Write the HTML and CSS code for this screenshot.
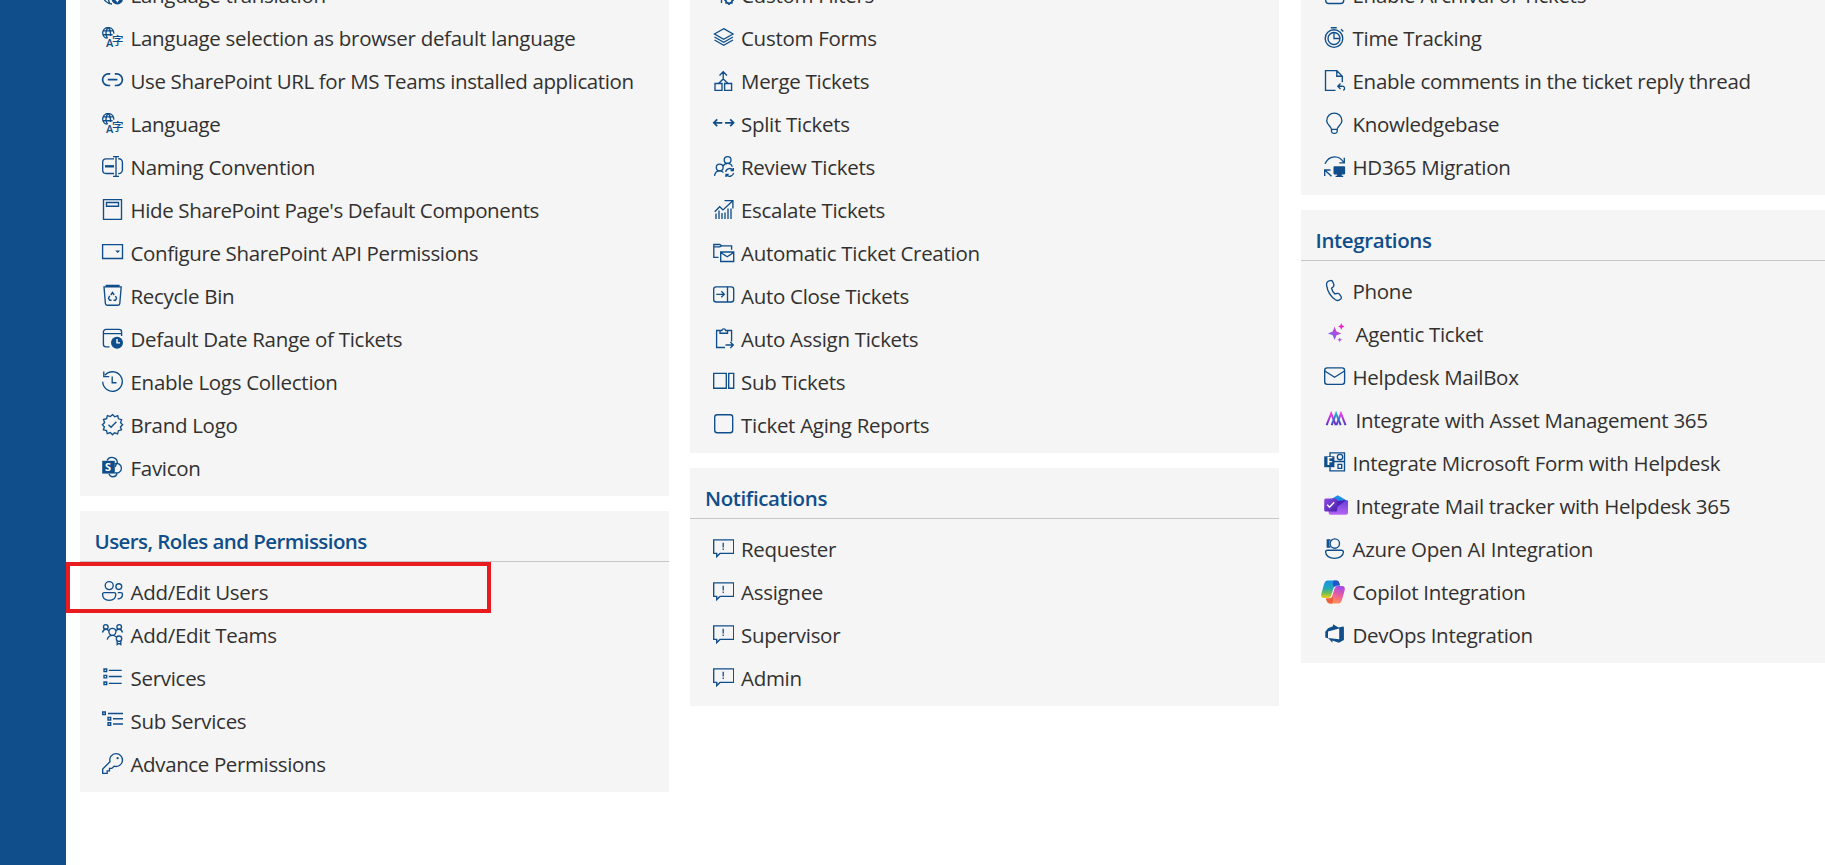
FILE: index.html
```html
<!DOCTYPE html>
<html lang="en">
<head>
<meta charset="utf-8">
<title>Settings</title>
<link rel="stylesheet" href="styles.css">
</head>
<body>
<svg class="defs" aria-hidden="true">
  <defs>
    <linearGradient id="g-spark" x1="0" y1="1" x2="1" y2="0"><stop offset="0" stop-color="#5b6cf0"/><stop offset=".5" stop-color="#a453e4"/><stop offset="1" stop-color="#f01cc0"/></linearGradient>
    <linearGradient id="g-am" x1="0" y1="0" x2="0" y2="1"><stop offset="0" stop-color="#ee3fe0"/><stop offset="1" stop-color="#5533c4"/></linearGradient>
    <linearGradient id="g-am2" x1="0" y1="0" x2="0" y2="1"><stop offset="0" stop-color="#22b4d4"/><stop offset="1" stop-color="#4a36c8"/></linearGradient>
    <linearGradient id="g-mail" x1="0" y1="0" x2="1" y2="1"><stop offset="0" stop-color="#8b4be0"/><stop offset="1" stop-color="#4a1fb0"/></linearGradient>
    <linearGradient id="g-mail2" x1="0" y1="0" x2="0" y2="1"><stop offset="0" stop-color="#6a3fd8"/><stop offset="1" stop-color="#b765f5"/></linearGradient>
    <linearGradient id="g-cp1" x1="0" y1="0" x2="0" y2="1"><stop offset="0" stop-color="#1b8fe8"/><stop offset=".45" stop-color="#22a9b8"/><stop offset=".75" stop-color="#7cc04a"/><stop offset="1" stop-color="#f2cf1d"/></linearGradient>
    <linearGradient id="g-cp2" x1="0.6" y1="0" x2="0.3" y2="1"><stop offset="0" stop-color="#a64be8"/><stop offset=".5" stop-color="#ee5f9a"/><stop offset="1" stop-color="#ff9a50"/></linearGradient>
    <symbol id="i-lang" viewBox="0 0 21 21">
      <path d="M4.6 11.3A5.5 5.5 0 1 1 11.7 6.600M.8 3.900h10.800M.8 7.700h9.800M6.200.5C3.400 3.200 3.400 8.300 5.600 11.300M6.200.5C8.400 2.600 8.900 5.600 8.400 9"/>
      <text x="4" y="19.700" class="i-latin">A</text><text x="9.900" y="17.800" class="i-han">字</text>
    </symbol>
    <symbol id="i-chat" viewBox="0 0 21 21">
      <path d="M.7 1.800h20v13.600H7l-3.300 3.200v-3.200h-3z"/><path d="M10.200 4.800v4.600M10.200 10.600v1.300" class="soft"/>
    </symbol>
    <symbol id="i-square" viewBox="0 0 21 21"><rect x="1.700" y=".7" width="18" height="18" rx="2.500"/></symbol>
  </defs>
</svg>
<div class="app">
  <aside class="rail"></aside>
  <main class="board">
    <div class="column">
      <section class="card">
        <ul class="list">
          <li class="item"><svg class="icon" viewBox="0 0 21 21"><path d="M10 20A9.500 9.500 0 1 1 19.800 10M1 7h18M1 14h9M10 .5C5 6 5 14 8 20"/><circle cx="15.300" cy="14.800" r="5.700" class="fill"/><path d="M15.300 12v5l-1.800-1.800M15.300 17l1.800-1.800" class="knock"/></svg>Language translation</li>
          <li class="item"><svg class="icon"><use href="#i-lang"/></svg>Language selection as browser default language</li>
          <li class="item tight"><svg class="icon" viewBox="0 0 21 21"><path class="bold" d="M8.200 3.900H6.400a5.600 5.600 0 0 0 0 11.600h1.800M12.800 3.900h1.800a5.600 5.600 0 0 1 0 11.600h-1.800M5.800 9.700h9.600"/></svg>Use SharePoint URL for MS Teams installed application</li>
          <li class="item"><svg class="icon"><use href="#i-lang"/></svg>Language</li>
          <li class="item"><svg class="icon" viewBox="0 0 21 21"><path d="M12 2.800H4A3.300 3.300 0 0 0 .7 6v8.300a3.300 3.300 0 0 0 3.300 3.200h8M16.300 2.800a3.500 3.500 0 0 1 4.100 3.400v7.900a3.500 3.500 0 0 1-4.100 3.400M11 .6h6M11 20.300h6M14 .6v19.700"/><path class="heavy" d="M3 10.300h9"/></svg>Naming Convention</li>
          <li class="item tight"><svg class="icon" viewBox="0 0 21 21"><path d="M1.500.6h18v19.800h-18zM4.500 3.500h12v3.700h-12z"/></svg>Hide SharePoint Page's Default Components</li>
          <li class="item tight"><svg class="icon" viewBox="0 0 21 21"><path d="M.6 2.600h19.900v13.900H.6z"/><path class="fill" d="M13.200 8.500h5l-2.500 2.400z"/></svg>Configure SharePoint API Permissions</li>
          <li class="item"><svg class="icon" viewBox="0 0 21 21"><path d="M2 1.800h17.200l-1.400 16.700a1.800 1.800 0 0 1-1.800 1.700H5.200a1.800 1.800 0 0 1-1.800-1.700zM3.600.5h14"/><path d="M8.800 10l1.700-2.500 1.700 2.500M7.700 10.800l-1.200 2.500 1.200 1.900h1.800M11.500 15.200h2l1.100-1.900-1.200-2.300"/></svg>Recycle Bin</li>
          <li class="item"><svg class="icon" viewBox="0 0 21 21"><path d="M7.500 18.800H4A2.600 2.600 0 0 1 1.400 16.200V4A2.600 2.600 0 0 1 4 1.400h13A2.600 2.600 0 0 1 19.600 4v4M1.400 5.600h18.200"/><circle cx="15" cy="14.700" r="6" class="fill"/><path d="M15 11v3.900h3" class="knock"/></svg>Default Date Range of Tickets</li>
          <li class="item"><svg class="icon" viewBox="0 0 21 21"><path d="M.7 10.800A9.800 9.800 0 1 0 3 4.200M1.800.6v5h5.400M10.200 5.500v6.200h4.300"/></svg>Enable Logs Collection</li>
          <li class="item"><svg class="icon" viewBox="0 0 21 21"><path d="M10.500.6l2.200 2.200 3-1.100.8 3.100 3.100.8-1 3 2 2.100-2.200 2.200 1.100 3-3.100.8-.8 3.100-3-1-2.100 2-2.200-2.200-3 1.100-.8-3.100-3.100-.8 1-3-2-2.100 2.200-2.200-1.100-3 3.100-.8.8-3.100 3 1z"/><path d="M6.500 10.800l2.500 2.500 5.400-5.600"/></svg>Brand Logo</li>
          <li class="item"><svg class="icon" viewBox="0 0 21 21"><path d="M5 3.500a5.500 5.500 0 0 1 10.400 2.600M12.700 6.800a4.800 4.800 0 1 1 0 8.800M7 17a4.200 4.200 0 0 0 8-.5M13 10l2-4"/><path class="fill" d="M.2 3.800h12.600v12.800H.2z"/><text x="3.100" y="14.400" class="i-mark">S</text></svg>Favicon</li>
        </ul>
      </section>
      <section class="card">
        <h2 class="card-title tight">Users, Roles and Permissions</h2>
        <ul class="list">
          <li class="item marked"><svg class="icon" viewBox="0 0 21 21"><circle cx="7.200" cy="4.600" r="4"/><circle cx="16.800" cy="5.600" r="2.900"/><path d="M.6 13.300a1.700 1.700 0 0 1 1.700-1.700h9.800a1.700 1.700 0 0 1 1.700 1.700c0 3.900-2.800 6-6.600 6s-6.600-2.100-6.600-6zM15.800 11.600h3a1.700 1.700 0 0 1 1.700 1.700c0 3-2 4.700-5 4.600"/></svg>Add/Edit Users</li>
          <li class="item"><svg class="icon" viewBox="0 0 21 21"><circle cx="3.800" cy="2.900" r="2.300"/><circle cx="17.200" cy="2.900" r="2.300"/><circle cx="10.400" cy="7.800" r="3.500"/><circle cx="17" cy="14.700" r="2.700"/><path d="M.5 8.500c.5-2.300 1.700-3.300 3.300-3.300 1.400 0 2.400.6 3 1.800M20.500 8.500c-.5-2.300-1.700-3.300-3.300-3.300-1.400 0-2.600.6-3.200 1.800M5.200 15.700c.7-2.800 2.600-4.400 5.200-4.400 1.500 0 2.700.5 3.600 1.400M15.200 17v3.500l1.800-1 1.800 1V17"/></svg>Add/Edit Teams</li>
          <li class="item"><svg class="icon" viewBox="0 0 21 21"><path d="M6.800 3.300H19.700M6.800 9.500H19.700M6.800 16.300H19.700M2 2h2.700v2.500H2zM2 8.300h2.700v2.500H2zM2 15h2.700v2.500H2z"/></svg>Services</li>
          <li class="item"><svg class="icon" viewBox="0 0 21 21"><path d="M6 3.500h15M11 8.700h10M11 14h10M.7 2h2.600v2.500H.7zM6 7.500h2.700v2.500H6zM6 12.700h2.700v2.500H6z"/></svg>Sub Services</li>
          <li class="item tight"><svg class="icon" viewBox="0 0 21 21"><path d="M14 .7a6.300 6.300 0 0 0-6 8L.7 16v4.300h4.500v-2.500h2.300v-2.400h2.300l2.300-2.200A6.400 6.400 0 1 0 14 .7z"/><circle cx="15.600" cy="5.200" r="1.100" class="fill"/></svg>Advance Permissions</li>
        </ul>
      </section>
    </div>

    <div class="column">
      <section class="card">
        <ul class="list">
          <li class="item"><svg class="icon" viewBox="0 0 21 21"><path d="M1 3h18M4 8h12M8.500 13v6"/><circle cx="16" cy="16" r="3.300" class="bold"/><path d="M16 11v2M16 19v2M11 16h2M19 16h2M12.500 12.500l1.400 1.400M18.100 18.100l1.400 1.400M12.500 19.500l1.400-1.400M18.100 13.900l1.400-1.400" class="bold"/></svg>Custom Filters</li>
          <li class="item"><svg class="icon" viewBox="0 0 21 21"><path d="M10.700 1.700L20 7l-9.300 5.300L1.500 7zM1.500 10l9.200 5.300L20 10M1.500 13l9.200 5.300L20 13"/></svg>Custom Forms</li>
          <li class="item"><svg class="icon" viewBox="0 0 21 21"><path d="M2 13.500h7v6.800H2zM11.600 13.500h7v6.800h-7zM5.500 13.500L10.200 9l4.900 4.500M10.200 9V1.800M6.500 5.400l3.700-3.700 3.800 3.700"/></svg>Merge Tickets</li>
          <li class="item"><svg class="icon" viewBox="0 0 21 21"><path class="bold" d="M.8 9.800h8.500M4.200 6.400L.8 9.800l3.400 3.400M12 9.800h8.500M17.200 6.400l3.400 3.400-3.400 3.400"/></svg>Split Tickets</li>
          <li class="item"><svg class="icon" viewBox="0 0 21 21"><circle cx="14.600" cy="4" r="3.400"/><circle cx="6.700" cy="11.500" r="3.400"/><path d="M1.500 19.800c.5-3 2.300-4.900 5.200-4.900 1.500 0 2.800.5 3.700 1.700M10 10.300c1-1.900 2.600-2.900 4.600-2.900 2.200 0 3.900 1.100 4.700 3.300M12.700 15.800a4 4 0 0 1 7.300-1.500M20.300 12v2.600h-2.700M20.600 17a4 4 0 0 1-7.200 1.700M13 21v-2.600h2.700"/></svg>Review Tickets</li>
          <li class="item"><svg class="icon" viewBox="0 0 21 21"><path d="M1.700 12.700l5-5 3.300 3.200L19.800 1.800M11.500 1.600h8.400v7.800"/><path d="M3 20v-5.500M6 20v-8.500M9 20v-6M12 20v-6.500M15 20V9.500M18 20V9.500"/></svg>Escalate Tickets</li>
          <li class="item"><svg class="icon" viewBox="0 0 21 21"><path d="M5.500 15.300H.8V2.500h6l1.700 1.300h10.100v4M.8 4.800h6l1.700-1M7.700 10h13v9.500h-13zM7.700 10.500l6.500 4.200 6.500-4.200"/></svg>Automatic Ticket Creation</li>
          <li class="item"><svg class="icon" viewBox="0 0 21 21"><rect x=".7" y="1.800" width="20" height="15.200" rx="2.500"/><path d="M14.500 1.800V17M3.300 9.300h8M8.300 6.300l3 3-3 3"/></svg>Auto Close Tickets</li>
          <li class="item"><svg class="icon" viewBox="0 0 21 21"><path d="M12 19.500H3.600V2.500h3.700M14 2.500h4.600v11M7 5.200V2.500h1.800a2 2 0 0 1 3.900 0h1.800v2.700zM12.500 17h7.800M17.300 14l3 3-3 3"/></svg>Auto Assign Tickets</li>
          <li class="item"><svg class="icon" viewBox="0 0 21 21"><path d="M.7 2.300h12.600v14.900H.7zM15.700 2.300h5v14.900h-5z"/></svg>Sub Tickets</li>
          <li class="item"><svg class="icon"><use href="#i-square"/></svg>Ticket Aging Reports</li>
        </ul>
      </section>
      <section class="card">
        <h2 class="card-title">Notifications</h2>
        <ul class="list">
          <li class="item"><svg class="icon"><use href="#i-chat"/></svg>Requester</li>
          <li class="item"><svg class="icon"><use href="#i-chat"/></svg>Assignee</li>
          <li class="item"><svg class="icon"><use href="#i-chat"/></svg>Supervisor</li>
          <li class="item"><svg class="icon"><use href="#i-chat"/></svg>Admin</li>
        </ul>
      </section>
    </div>

    <div class="column">
      <section class="card">
        <ul class="list">
          <li class="item"><svg class="icon" viewBox="0 0 21 21"><rect x="1.700" y="1" width="18" height="18.500" rx="3"/></svg>Enable Archival of Tickets</li>
          <li class="item"><svg class="icon" viewBox="0 0 21 21"><circle cx="10" cy="11.500" r="8.800"/><circle cx="10" cy="11.500" r="6"/><path d="M10 5.500v6h6M6.800.7h6M17 2.300l2.300 2.300"/></svg>Time Tracking</li>
          <li class="item"><svg class="icon" viewBox="0 0 21 21"><path d="M11.500 20.300H1.500V.6h11.300l5.500 5.600v6M12.800.6v5.600h5.500M16.500 13.500l-2.700 2.700 2.700 2.700M13.800 16.200h4.500a2.200 2.200 0 0 1 1 4.200"/></svg>Enable comments in the ticket reply thread</li>
          <li class="item"><svg class="icon" viewBox="0 0 21 21"><path d="M7.500 16.300C7.200 13 2.700 12 2.700 7.700a7.600 7.600 0 0 1 15.200 0c0 4.300-4.500 5.300-4.800 8.600zM7.500 16.300v2.200a2 2 0 0 0 2 1.800h1.700a2 2 0 0 0 2-1.800v-2.200"/></svg>Knowledgebase</li>
          <li class="item"><svg class="icon" viewBox="0 0 21 21"><path d="M1 7.800C3 3.200 6.500.8 10.800.8c3.800 0 6.800 2 9 5.700M20.300 1.800v5h-5M.7 20V14h5.800M1 14.300l6.500 6"/><path class="fill" d="M10.300 10.300h10a.8.8 0 0 1 .8.8v6.500a.8.8 0 0 1-.8.8h-2.600v1.400h1.500v1.200h-7.600v-1.200h1.500v-1.400h-2.800a.8.8 0 0 1-.8-.8v-6.500a.8.8 0 0 1 .8-.8z"/></svg>HD365 Migration</li>
        </ul>
      </section>
      <section class="card">
        <h2 class="card-title">Integrations</h2>
        <ul class="list">
          <li class="item"><svg class="icon" viewBox="0 0 21 21"><path d="M5.200.9l1.400-.3c1-.2 1.900.3 2.200 1.200l1 2.600c.3.800.1 1.700-.5 2.300L7.500 8.200c.4 2 1.900 4.500 3.500 5.800l2.200-.6c.8-.2 1.700 0 2.200.7l1.600 2.200c.6.800.5 1.900-.2 2.600l-.8.700c-1.200 1.100-3 1.100-4.500.1C6.800 16.800 3.600 11.700 2.600 5.400 2.300 3.300 3.300 1.500 5.200.9z"/></svg>Phone</li>
          <li class="item"><svg class="icon wide" viewBox="0 0 24 21"><g class="plain" fill="url(#g-spark)"><path d="M10.600 3.700l1.900 4.800 4.800 1.900-4.800 1.800-1.900 4.800-1.900-4.800-4.800-1.800 4.800-1.900z"/><path fill="#ee22cc" d="M17.300.2l1.100 2.200 2.200 1-2.200 1.100-1.100 2.200-1.100-2.200-2.200-1.100 2.200-1z"/><path fill="#b851e0" d="M15.700 14.400l.8 1.600 1.600.8-1.600.8-.8 1.600-.8-1.600-1.600-.8 1.600-.8z"/></g></svg>Agentic Ticket</li>
          <li class="item"><svg class="icon" viewBox="0 0 21 21"><rect x=".7" y="1.900" width="19.900" height="16.400" rx="2.500"/><path d="M.8 5l9.800 6.200L20.500 5"/></svg>Helpdesk MailBox</li>
          <li class="item"><svg class="icon wide" viewBox="0 0 24 21"><path stroke="url(#g-am)" class="logo" d="M2.600 16.200L7.200 4.500l4.600 11.700M12.400 16.200L17 4.500l4.500 11.700"/><path stroke="url(#g-am2)" class="logo" d="M7.700 16.200l4.400-11.700 4.600 11.700"/></svg>Integrate with Asset Management 365</li>
          <li class="item"><svg class="icon" viewBox="0 0 21 21"><path d="M6 .8h14.500v18H6zM9 9.500h11.500M14 12.300h3.700v4H14z"/><circle cx="16" cy="5" r="2.700"/><path class="fill" d="M.2 4.300h10.200v10.900H.2z"/><text x="2.600" y="13.300" class="i-mark">F</text></svg>Integrate Microsoft Form with Helpdesk</li>
          <li class="item"><svg class="icon wide" viewBox="0 0 24 21"><g class="plain"><path fill="#1c8ee8" d="M13.800.2l9.400 5.600v5L13 13 5 5.200z"/><path fill="url(#g-mail2)" d="M4.600 7l19.400-1.500v12a2.200 2.200 0 0 1-2.200 2.300H6.800a2.200 2.200 0 0 1-2.200-2.300z"/><path fill="#4d22b8" d="M12 6l10.500-1L13 12z"/><rect fill="url(#g-mail)" x=".2" y="3.600" width="13" height="13" rx="1.500"/></g><path class="knock" d="M3.200 9.600l2.300 2.600 4.700-5"/></svg>Integrate Mail tracker with Helpdesk 365</li>
          <li class="item"><svg class="icon" viewBox="0 0 21 21"><circle cx="10.800" cy="5.500" r="4.700"/><path d="M6.500 2H3.300v7h3.200M4.700 2v7M3.500 12.200h14a1.900 1.900 0 0 1 1.900 1.900c0 3.800-4 6.200-8.900 6.200s-8.900-2.400-8.900-6.200a1.900 1.900 0 0 1 1.900-1.900z"/></svg>Azure Open AI Integration</li>
          <li class="item"><svg class="icon copilot" viewBox="0 0 24 24"><g class="plain"><path fill="url(#g-cp1)" d="M6.500.6h9c1.700 0 2.400 1.200 2.900 2.800l.6 2h-2.600c-1.700 0-2.600 1-3.100 2.700l-2.300 7.400c-.5 1.500-1.300 2.500-3 2.500H3c-2.400 0-3.400-1.900-2.600-4.500L3 4.300C3.800 2 4.700.6 6.500.6z"/><path fill="#2455c8" d="M12.500.6h3c1.700 0 2.400 1.200 2.900 2.800l.6 2h-2.600c-1.700 0-2.600 1-3.100 2.700l-1.500-4z"/><path fill="url(#g-cp2)" d="M17.500 23.400h-9c-1.700 0-2.400-1.200-2.900-2.800L5 18.500h2.600c1.700 0 2.600-1 3.100-2.700L13 8.400c.5-1.500 1.300-2.500 3-2.500h5c2.400 0 3.400 1.900 2.600 4.500L21 19.700c-.8 2.300-1.700 3.700-3.500 3.700z"/><path fill="#f0603c" d="M11.500 23.400h-3c-1.700 0-2.400-1.200-2.900-2.800L5 18.500h2.600c1.700 0 2.600-1 3.100-2.700l1.500 3z"/><path fill="#f5f5f5" d="M13.600 6.800h2.200c-1.300 0-2 .9-2.500 2.400l-2.200 7c-.4 1.200-1.200 1.700-2.400 1.800h-.9c1.300-.2 1.900-1 2.300-2.300l2.200-7c.3-1 .6-1.600 1.300-1.900z"/></g></svg>Copilot Integration</li>
          <li class="item"><svg class="icon" viewBox="0 0 21 21"><path class="fill" fill-rule="evenodd" d="M1.300 7.700L4 4.300l5-2V.2l5.500 3.400 4.600-1.200.8.600v13l-5 2.700-6.500-2.200v2.200L4.600 14.500 1.300 13.500zM4 7.500v6.500l11.200 1.300V4.400z"/></svg>DevOps Integration</li>
        </ul>
      </section>
    </div>
  </main>
</div>
</body>
</html>
```
FILE: styles.css
```css
*, *::after { box-sizing: border-box; }

body {
  margin: 0;
  height: 100vh;
  overflow: hidden;
  background: #fff;
  color: #323130;
  font: 20.5px "Open Sans", "Noto Sans", sans-serif;
  font-kerning: none;
  letter-spacing: -0.29px;
}

.defs { position: absolute; width: 0; height: 0; }

.app { display: flex; height: 100vh; overflow: hidden; }
.rail { flex: none; width: 66px; background: #0f4e8a; }

.board {
  flex: none;
  display: grid;
  grid-template-columns: repeat(3, 589px);
  column-gap: 21.5px;
  align-items: start;
  margin: -35px 0 0 13.5px;
}

.column { display: flex; flex-direction: column; gap: 15px; }
.card { background: #f5f5f5; }

.card-title {
  height: 51px;
  margin: 0;
  padding: 3px 0 0 15px;
  border-bottom: 1px solid #c6c6c6;
  color: #0f4e8a;
  font-size: 20.5px;
  font-weight: 600;
  line-height: 54px;
  letter-spacing: -0.38px;
  white-space: nowrap;
}
.card-title.tight { letter-spacing: -0.56px; }

.list { list-style: none; margin: 0; padding: 8px 0 7px 22.5px; }
.column:last-child .list { padding-left: 23.5px; }

.item {
  position: relative;
  display: flex;
  gap: 7.5px;
  height: 43px;
  line-height: 44px;
  white-space: nowrap;
}
.item.tight { letter-spacing: -0.37px; }

/* Callout frame around the highlighted entry */
.marked::after {
  content: "";
  position: absolute;
  left: -36px;
  top: -8px;
  width: 425px;
  height: 51px;
  border: 4px solid #e81b1e;
}

.icon {
  flex: none;
  width: 21px;
  height: 21px;
  margin-top: 11px;
  overflow: visible;
  fill: none;
  stroke: #0f4e8a;
  stroke-width: 1.35;
}
.icon.wide { width: 24px; }
.icon.copilot { width: 24px; height: 24px; margin: 10px 0 0 -3px; }

.fill { fill: #0f4e8a; stroke: none; }
.plain { stroke: none; }
.bold { stroke-width: 1.7; }
.heavy { stroke-width: 2.4; }
.soft { stroke-width: 1.3; }
.knock { stroke: #fff; stroke-width: 1.4; }
.logo { stroke-width: 2; }

.i-latin, .i-han, .i-mark { stroke: none; fill: #0f4e8a; letter-spacing: 0; }
.i-latin { font: 600 11px "Open Sans", sans-serif; }
.i-han { font: 500 11.5px "Noto Sans CJK SC", sans-serif; }
.i-mark { fill: #fff; font: 700 11px "Open Sans", sans-serif; }
```
